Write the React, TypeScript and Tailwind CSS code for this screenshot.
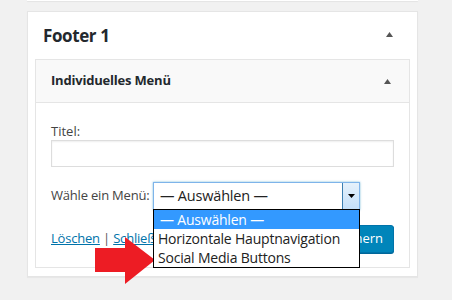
const font = { fontFamily: '"Open Sans", "Noto Sans", Arial, sans-serif' };

function Caret({ className }: { className: string }) {
    return (
        <svg width="7" height="5" viewBox="0 0 7 5" className={className}>
            <polygon points="0,5 3.5,0 7,5" fill="#555" />
        </svg>
    );
}

export default function App() {
    return (
        <div className="relative h-[300px] w-[452px] overflow-hidden bg-[#f1f1f1]" style={font}>
            {/* bottom of the widget above */}
            <div className="ml-[27px] h-px w-[391px] bg-white shadow-[0_1px_1px_rgba(0,0,0,0.06)]" />

            <div className="ml-[27px] mt-[10px] h-[266px] w-[391px] border border-[#e5e5e5] bg-white shadow-[0_1px_1px_rgba(0,0,0,0.04)]">
                <div className="flex h-[47px] items-center justify-between pl-[15px] pr-[24px]">
                    <h2 className="whitespace-nowrap text-[17px] font-bold leading-none tracking-[-0.4px] text-[#23282d]">Footer 1</h2>
                    <Caret className="mb-[3px]" />
                </div>

                <div className="ml-[7px] w-[375px] border border-[#e5e5e5]">
                    <div className="flex h-[43px] items-center justify-between border-b border-[#e5e5e5] bg-[#f9f9f9] pl-[15px] pr-[18px]">
                        <h3 className="whitespace-nowrap text-[13px] font-bold tracking-[-0.2px] text-[#23282d]">Individuelles Menü</h3>
                        <Caret className="" />
                    </div>

                    <div className="whitespace-nowrap px-[15px] pb-[14px] pt-[19px] text-[13px] text-[#444]">
                        <label className="block leading-[18px]">Titel:</label>
                        <div className="h-[27px] w-full border border-[#ddd] bg-white shadow-[inset_0_1px_2px_rgba(0,0,0,0.07)]" />

                        <div className="mt-[15px] flex h-[28px] items-center">
                            <span className="w-[102px] tracking-[-0.2px]">Wähle ein Menü:</span>
                            <div className="relative flex h-[28px] w-[207px] items-center border border-[#7eb4ea] bg-white shadow-[0_0_2px_rgba(30,140,190,0.6)]">
                                <span className="pl-[6px] text-[14.5px] tracking-[-0.2px] text-[#222]">— Auswählen —</span>
                                <div className="absolute right-0 top-0 flex h-[26px] w-[17px] items-center justify-center border-l border-[#3c7fb1] bg-gradient-to-b from-[#e5f1fb] to-[#c4e0fa]">
                                    <svg width="7" height="4" viewBox="0 0 7 4">
                                        <polygon points="0,0 7,0 3.5,4" fill="#000" />
                                    </svg>
                                </div>

                                <ul className="absolute left-[-1px] top-[26px] z-10 w-[207px] border border-black bg-white text-[14px] leading-[19px] tracking-[-0.2px] text-[#222]">
                                    <li className="bg-[#3399ff] pl-[6px] text-white">— Auswählen —</li>
                                    <li className="pl-[4px]">Horizontale Hauptnavigation</li>
                                    <li className="pl-[4px]">Social Media Buttons</li>
                                </ul>
                            </div>
                        </div>

                        <div className="mt-[15px] flex h-[28px] items-center justify-between">
                            <div className="text-[13px] tracking-[-0.2px]">
                                <a href="#" className="text-[#0073aa] underline">Löschen</a>
                                <span className="text-[#555]"> | </span>
                                <a href="#" className="text-[#0073aa] underline">Schließen</a>
                            </div>
                            <button className="h-[28px] rounded-[3px] border border-[#0073aa] bg-[#0085ba] px-[10px] text-[13px] text-white shadow-[0_1px_0_#006799]">
                                Speichern
                            </button>
                        </div>
                    </div>
                </div>
            </div>

            {/* red pointer arrow */}
            <svg className="absolute left-0 top-0" width="452" height="300" viewBox="0 0 452 300">
                <polygon points="95,248 125,248 125,237 155,260 125,284 125,272 95,272" fill="#ed1c24" />
            </svg>
        </div>
    );
}
